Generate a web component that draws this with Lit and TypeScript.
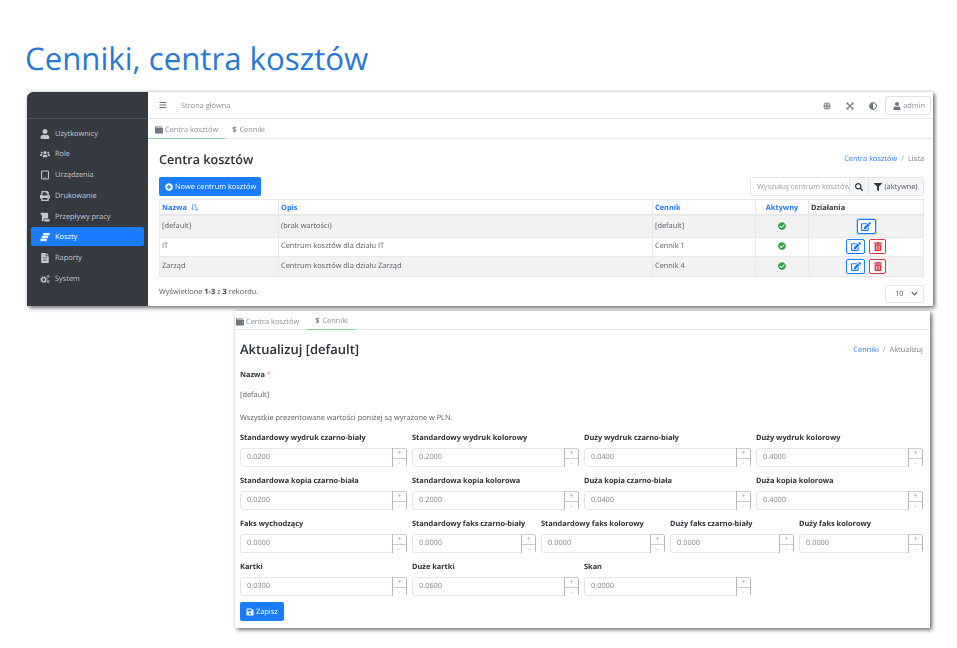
import { LitElement, html, css, svg } from "lit";
import { customElement } from "lit/decorators.js";

const fa = (vb: string, d: string, cls = "") =>
  html`<svg class="ic ${cls}" viewBox=${vb} fill="currentColor"><path d=${d}></path></svg>`;

const P = {
  user: ["0 0 448 512", "M224 256c70.7 0 128-57.3 128-128S294.7 0 224 0 96 57.3 96 128s57.3 128 128 128zm89.6 32h-16.7c-22.2 10.2-46.9 16-72.9 16s-50.6-5.8-72.9-16h-16.7C60.2 288 0 348.2 0 422.4V464c0 26.5 21.5 48 48 48h352c26.5 0 48-21.5 48-48v-41.6c0-74.2-60.2-134.4-134.4-134.4z"],
  check: ["0 0 512 512", "M504 256c0 136.967-111.033 248-248 248S8 392.967 8 256 119.033 8 256 8s248 111.033 248 248zM227.314 387.314l184-184c6.248-6.248 6.248-16.379 0-22.627l-22.627-22.627c-6.248-6.249-16.379-6.249-22.628 0L216 308.118l-70.059-70.059c-6.248-6.248-16.379-6.248-22.628 0l-22.627 22.627c-6.248 6.248-6.248 16.379 0 22.627l104 104c6.249 6.249 16.379 6.249 22.628.001z"],
  plus: ["0 0 512 512", "M256 8C119 8 8 119 8 256s111 248 248 248 248-111 248-248S393 8 256 8zm144 276c0 6.6-5.4 12-12 12h-92v92c0 6.6-5.4 12-12 12h-56c-6.6 0-12-5.4-12-12v-92h-92c-6.6 0-12-5.4-12-12v-56c0-6.6 5.4-12 12-12h92v-92c0-6.6 5.4-12 12-12h56c6.6 0 12 5.4 12 12v92h92c6.6 0 12 5.4 12 12v56z"],
  search: ["0 0 512 512", "M505 442.7L405.3 343c-4.5-4.5-10.6-7-17-7H372c27.6-35.3 44-79.7 44-128C416 93.1 322.9 0 208 0S0 93.1 0 208s93.1 208 208 208c48.3 0 92.7-16.4 128-44v16.3c0 6.4 2.5 12.5 7 17l99.7 99.7c9.4 9.4 24.6 9.4 33.9 0l28.3-28.3c9.4-9.4 9.4-24.6.1-34zM208 336c-70.7 0-128-57.2-128-128 0-70.7 57.2-128 128-128 70.7 0 128 57.2 128 128 0 70.7-57.2 128-128 128z"],
  filter: ["0 0 512 512", "M487.976 0H24.028C2.71 0-8.047 25.866 7.058 40.971L192 225.941V432c0 7.831 3.821 15.17 10.237 19.662l80 55.98C298.02 518.69 320 507.493 320 487.98V225.941l184.947-184.97C520.021 25.896 509.338 0 487.976 0z"],
  trash: ["0 0 448 512", "M32 464a48 48 0 0 0 48 48h288a48 48 0 0 0 48-48V128H32zm272-256a16 16 0 0 1 32 0v224a16 16 0 0 1-32 0zm-96 0a16 16 0 0 1 32 0v224a16 16 0 0 1-32 0zm-96 0a16 16 0 0 1 32 0v224a16 16 0 0 1-32 0zM432 32H312l-9.4-18.7A24 24 0 0 0 281.1 0H166.8a23.72 23.72 0 0 0-21.4 13.3L136 32H16A16 16 0 0 0 0 48v32a16 16 0 0 0 16 16h416a16 16 0 0 0 16-16V48a16 16 0 0 0-16-16z"],
  edit: ["0 0 576 512", "M402.6 83.2l90.2 90.2c3.8 3.8 3.8 10 0 13.8L274.4 405.6l-92.8 10.3c-12.4 1.4-22.9-9.1-21.5-21.5l10.3-92.8L388.8 83.2c3.8-3.8 10-3.8 13.8 0zm162-22.9l-48.8-48.8c-15.2-15.2-39.9-15.2-55.2 0l-35.4 35.4c-3.8 3.8-3.8 10 0 13.8l90.2 90.2c3.8 3.8 10 3.8 13.8 0l35.4-35.4c15.2-15.3 15.2-40 0-55.2zM384 346.2V448H64V128h229.8c3.2 0 6.2-1.3 8.5-3.5l40-40c7.6-7.6 2.2-20.5-8.5-20.5H48C21.5 64 0 85.5 0 112v352c0 26.5 21.5 48 48 48h352c26.5 0 48-21.5 48-48V306.2c0-10.7-12.9-16-20.5-8.5l-40 40c-2.2 2.3-3.5 5.3-3.5 8.5z"],
  save: ["0 0 448 512", "M433.941 129.941l-83.882-83.882A48 48 0 0 0 316.118 32H48C21.49 32 0 53.49 0 80v352c0 26.51 21.49 48 48 48h352c26.51 0 48-21.49 48-48V163.882a48 48 0 0 0-14.059-33.941zM224 416c-35.346 0-64-28.654-64-64 0-35.346 28.654-64 64-64s64 28.654 64 64c0 35.346-28.654 64-64 64zm96-304.52V212c0 6.627-5.373 12-12 12H76c-6.627 0-12-5.373-12-12V108c0-6.627 5.373-12 12-12h228.52c3.183 0 6.235 1.264 8.485 3.515l3.48 3.48A11.996 11.996 0 0 1 320 111.48z"],
  bars: ["0 0 448 512", "M16 132h416c8.837 0 16-7.163 16-16V76c0-8.837-7.163-16-16-16H16C7.163 60 0 67.163 0 76v40c0 8.837 7.163 16 16 16zm0 160h416c8.837 0 16-7.163 16-16v-40c0-8.837-7.163-16-16-16H16c-8.837 0-16 7.163-16 16v40c0 8.837 7.163 16 16 16zm0 160h416c8.837 0 16-7.163 16-16v-40c0-8.837-7.163-16-16-16H16c-8.837 0-16 7.163-16 16v40c0 8.837 7.163 16 16 16z"],
  wallet: ["0 0 512 512", "M461.2 128H80c-8.84 0-16-7.16-16-16s7.16-16 16-16h384c8.84 0 16-7.16 16-16 0-26.51-21.49-48-48-48H64C28.65 32 0 60.65 0 96v320c0 35.35 28.65 64 64 64h397.2c28.02 0 50.8-21.53 50.8-48V176c0-26.47-22.78-48-50.8-48zM416 336c-17.67 0-32-14.33-32-32s14.33-32 32-32 32 14.33 32 32-14.33 32-32 32z"],
  adjust: ["0 0 512 512", "M8 256c0 136.967 111.033 248 248 248s248-111.033 248-248S392.967 8 256 8 8 119.033 8 256zm248 184V72c101.705 0 184 82.311 184 184 0 101.705-82.311 184-184 184z"],
  print: ["0 0 512 512", "M448 192V77.25c0-8.49-3.37-16.62-9.37-22.63L393.37 9.37c-6-6-14.14-9.37-22.63-9.37H96C78.33 0 64 14.33 64 32v160c-35.35 0-64 28.65-64 64v112c0 8.84 7.16 16 16 16h48v96c0 17.67 14.33 32 32 32h320c17.67 0 32-14.33 32-32v-96h48c8.84 0 16-7.16 16-16V256c0-35.35-28.65-64-64-64zm-64 256H128v-96h256v96zm0-224H128V64h192v48c0 8.84 7.16 16 16 16h48v96zm48 72c-13.25 0-24-10.75-24-24 0-13.26 10.75-24 24-24s24 10.74 24 24c0 13.25-10.75 24-24 24z"],
  file: ["0 0 384 512", "M224 136V0H24C10.7 0 0 10.7 0 24v464c0 13.3 10.7 24 24 24h336c13.3 0 24-10.7 24-24V160H248c-13.2 0-24-10.8-24-24zm64 236c0 6.6-5.4 12-12 12H108c-6.6 0-12-5.4-12-12v-8c0-6.6 5.4-12 12-12h168c6.6 0 12 5.4 12 12v8zm0-64c0 6.6-5.4 12-12 12H108c-6.6 0-12-5.4-12-12v-8c0-6.6 5.4-12 12-12h168c6.6 0 12 5.4 12 12v8zm0-72v8c0 6.6-5.4 12-12 12H108c-6.6 0-12-5.4-12-12v-8c0-6.6 5.4-12 12-12h168c6.6 0 12 5.4 12 12zm96-114.1v6.1H256V0h6.1c6.4 0 12.5 2.5 17 7l97.9 98c4.5 4.5 7 10.6 7 16.9z"],
} as const;

const icon = (n: keyof typeof P) => fa(P[n][0], P[n][1]);

const custom = (body: unknown, vb = "0 0 16 16") =>
  html`<svg class="ic" viewBox=${vb} fill="currentColor">${body}</svg>`;

const usersIc = () => custom(svg`
  <circle cx="8" cy="5.6" r="2.5"></circle><path d="M4 13c0-3 1.5-4.4 4-4.4S12 10 12 13z"></path>
  <circle cx="2.8" cy="6" r="1.6"></circle><circle cx="13.2" cy="6" r="1.6"></circle>
  <path d="M0 11c0-2 1-3 2.6-3 .6 0 1 .2 1.4.5C3.300 9.300 3 10 3 11z"></path>
  <path d="M16 11c0-2-1-3-2.600-3-.6 0-1 .2-1.400.5.700.8 1 1.500 1 2.500z"></path>`);
const tabletIc = () => custom(svg`<rect x="2.500" y="1.500" width="11" height="13" rx="1.500" fill="none" stroke="currentColor" stroke-width="1.700"></rect><rect x="6" y="12" width="4" height="1.200"></rect>`);
const scrollIc = () => custom(svg`<path d="M1 2.500C1 1.600 1.700 1 2.600 1H11c1.200 0 2 .8 2 2v7.500h-7V12.500C6 14 5 15 4 15s-1-1-1-2V4.500H1z"></path><path d="M7 11.500h8.500V13c0 1.200-.8 2-2 2H6.500c.5-.6.5-1.500.5-3.500z"></path>`);
const coinsIc = () => custom(svg`<rect x="5" y="1.500" width="10.500" height="4" rx="1"></rect><rect x="2.500" y="6" width="10.500" height="4" rx="1" stroke="#1a7cff" stroke-width=".5"></rect><rect x=".5" y="10.500" width="10.500" height="4.300" rx="1" stroke="#1a7cff" stroke-width=".5"></rect>`);
const cogsIc = () => custom(svg`
  <circle cx="6" cy="9" r="3.200" fill="none" stroke="currentColor" stroke-width="2.300"></circle>
  <circle cx="6" cy="9" r="5" fill="none" stroke="currentColor" stroke-width="1.500" stroke-dasharray="1.800 2.100"></circle>
  <circle cx="13.200" cy="3.800" r="1.600" fill="none" stroke="currentColor" stroke-width="1.300"></circle>
  <circle cx="13.200" cy="12.200" r="1.600" fill="none" stroke="currentColor" stroke-width="1.300"></circle>`);
const globeIc = () => custom(svg`<circle cx="8" cy="8" r="7"></circle><g fill="none" stroke="#fff" stroke-width="1"><ellipse cx="8" cy="8" rx="3" ry="7"></ellipse><path d="M1 5.500h14M1 10.500h14"></path></g>`);
const expandIc = () => custom(svg`<path d="M1 1h5L4.300 2.700 8 6.300 11.700 2.700 10 1h5v5l-1.700-1.700L9.700 8l3.600 3.700L15 10v5h-5l1.700-1.700L8 9.700l-3.700 3.600L6 15H1v-5l1.700 1.700L6.300 8 2.700 4.300 1 6z"></path>`);
const sortIc = () => custom(svg`<path d="M3 1.500h1.800v9.500H7L3.900 15 .8 11H3z"></path><rect x="8.500" y="2" width="2.600" height="5.500"></rect><rect x="8.500" y="9" width="7" height="1.700"></rect><rect x="8.500" y="12.500" width="7" height="2.300"></rect>`);

const MENU = [
  { label: "Użytkownicy", ic: () => icon("user") },
  { label: "Role", ic: usersIc },
  { label: "Urządzenia", ic: tabletIc },
  { label: "Drukowanie", ic: () => icon("print") },
  { label: "Przepływy pracy", ic: scrollIc },
  { label: "Koszty", ic: coinsIc, active: true },
  { label: "Raporty", ic: () => icon("file") },
  { label: "System", ic: cogsIc },
];

const ROWS = [
  { name: "[default]", desc: "(brak wartości)", list: "[default]", del: false },
  { name: "IT", desc: "Centrum kosztów dla działu IT", list: "Cennik 1", del: true },
  { name: "Zarząd", desc: "Centrum kosztów dla działu Zarząd", list: "Cennik 4", del: true },
];

const FORM = [
  { cls: "four", fields: [["Standardowy wydruk czarno-biały", "0.0200"], ["Standardowy wydruk kolorowy", "0.2000"], ["Duży wydruk czarno-biały", "0.0400"], ["Duży wydruk kolorowy", "0.4000"]] },
  { cls: "four", fields: [["Standardowa kopia czarno-biała", "0.0200"], ["Standardowa kopia kolorowa", "0.2000"], ["Duża kopia czarno-biała", "0.0400"], ["Duża kopia kolorowa", "0.4000"]] },
  { cls: "five", fields: [["Faks wychodzący", "0.0000"], ["Standardowy faks czarno-biały", "0.0000"], ["Standardowy faks kolorowy", "0.0000"], ["Duży faks czarno-biały", "0.0000"], ["Duży faks kolorowy", "0.0000"]] },
  { cls: "four", fields: [["Kartki", "0.0300"], ["Duże kartki", "0.0600"], ["Skan", "0.0000"]] },
];

@customElement("app-root")
export class AppRoot extends LitElement {
  static styles = css`
    :host {
      display: block;
      width: 957px;
      height: 648px;
      overflow: hidden;
      background: #fff;
      font-family: "Open Sans", "Liberation Sans", sans-serif;
      font-size: 7.4px;
      text-rendering: geometricPrecision;
      color: #5a6169;
    }
    .ic { width: 8px; height: 8px; flex: none; display: inline-block; }
    .title {
      margin: 0;
      padding: 38px 0 0 25px;
      height: 92px;
      box-sizing: border-box;
      font-size: 31.2px;
      line-height: 42px;
      font-weight: 400;
      color: #2a78d6;
    }
    .panel {
      background: #fff;
      filter: blur(0.3px);
      box-shadow: 2px 2px 4px rgba(0, 0, 0, 0.55), 0 -1px 3px rgba(0, 0, 0, 0.12);
    }
    .top-panel {
      display: flex;
      margin-left: 27px;
      width: 906px;
      height: 214px;
    }
    .side {
      width: 121px;
      flex: none;
      background: #343a40;
      border-top-left-radius: 6px;
      color: #c2c7d0;
    }
    .side-head { height: 27px; border-bottom: 1px solid #4b545c; box-sizing: border-box; }
    .menu { display: flex; flex-direction: column; gap: 1.8px; padding: 4px 4px 0; }
    .menu a {
      display: flex;
      align-items: center;
      gap: 5px;
      height: 19px;
      padding: 2px 0 0 9px;
      box-sizing: border-box;
      border-radius: 2px;
    }
    .menu a .ic { width: 10px; height: 10px; }
    .menu a.on { background: #1a7cff; color: #fff; }
    .main { flex: 1; min-width: 0; }
    .bar {
      display: flex;
      align-items: center;
      height: 27px;
      padding: 1px 2px 0 11px;
      box-sizing: border-box;
      border-bottom: 1px solid #e6e8ea;
      color: #8a9097;
    }
    .bar .burger { width: 8px; height: 9px; color: #6c757d; margin-right: 14px; display: flex; }
    .bar .grow { flex: 1; }
    .bar .tool { width: 8px; height: 8px; color: #6c757d; margin-right: 15px; display: flex; }
    .bar .tool.last { margin-right: 8px; }
    .who {
      display: flex;
      align-items: center;
      gap: 2px;
      height: 19px;
      padding: 0 5px 0 7px;
      border: 1px solid #dee2e6;
      border-radius: 3px;
      box-sizing: border-box;
    }
    .who .ic { color: #6c757d; }
    .tabs { display: flex; height: 20px; border-bottom: 1px solid #e6e8ea; box-sizing: border-box; color: #8a9097; }
    .tabs a { display: flex; align-items: center; gap: 2px; padding: 2px 7px 0; margin-bottom: -1px; }
    .tabs a .ic { color: #6c757d; }
    .tabs a b { color: #6c757d; font-weight: 700; margin-right: 1px; }
    .tabs a.on { border-bottom: 1px solid #8ed2a4; }
    .tabs a.price { padding: 2px 8px 0 7px; }
    .content { padding: 0 9px 0 11px; }
    .head { display: flex; align-items: center; justify-content: space-between; height: 38px; padding-top: 1px; box-sizing: border-box; }
    .head h2 { margin: 1px 0 0; font-size: 12.6px; font-weight: 600; color: #2b3035; }
    .crumb { color: #7a8087; }
    .crumb a { color: #2f86f5; }
    .crumb i { font-style: normal; padding: 0 4px; color: #9aa0a6; }
    .tools { display: flex; justify-content: space-between; height: 19px; margin-bottom: 3px; }
    .btn {
      display: flex;
      align-items: center;
      gap: 2px;
      background: #1a7cff;
      color: #fff;
      border-radius: 2px;
      box-sizing: border-box;
      white-space: nowrap;
    }
    .add { width: 102px; height: 19px; padding-left: 6px; }
    .find { display: flex; border: 1px solid #e4e7ea; border-radius: 2px; box-sizing: border-box; width: 174px; }
    .find span { display: flex; align-items: center; }
    .find .q { width: 98px; padding-left: 6px; color: #9aa0a6; white-space: nowrap; overflow: hidden; box-sizing: border-box; }
    .find .s { width: 19px; justify-content: center; background: #f4f5f6; border-left: 1px solid #e4e7ea; color: #343a40; box-sizing: border-box; }
    .find .f { flex: 1; justify-content: center; gap: 2px; background: #f4f5f6; border-left: 1px solid #e4e7ea; }
    .find .f .ic { color: #343a40; }
    table { border-collapse: collapse; table-layout: fixed; width: 764px; }
    th, td { border: 1px solid #e6e8ea; padding: 0 2px; text-align: left; }
    th { height: 15px; font-weight: 700; color: #1a7cff; border-bottom-width: 2px; padding-top: 3px; box-sizing: border-box; }
    th.plain { color: #343a40; }
    th .sort { display: inline-block; width: 11px; height: 8px; vertical-align: -1px; color: #6aa8f7; }
    th .sort .ic { width: 11px; height: 8px; }
    tbody tr:nth-child(odd) { background: #f2f2f2; }
    td { padding-bottom: 1px; box-sizing: content-box; height: 17px; }
    tr.tall td { height: 20px; }
    tr:nth-child(3) td { height: 18px; }
    td.cell-act { padding-bottom: 0; }
    .mid { text-align: center; }
    .mid .ic { width: 8px; height: 8px; color: #28a745; display: block; margin: 0 auto; }
    .acts { display: flex; justify-content: center; gap: 4px; }
    .act {
      display: flex;
      align-items: center;
      justify-content: center;
      width: 19px;
      height: 15px;
      border: 1px solid #1a7cff;
      border-radius: 2px;
      box-sizing: border-box;
      color: #1a7cff;
      background: #fff;
    }
    .act .ic { width: 10px; height: 9px; }
    .act.del { color: #dc3545; border-color: #dc3545; width: 17px; }
    tr.tall .act { box-shadow: 0 0 0 1px #b6d4fb; }
    .foot { display: flex; align-items: center; justify-content: space-between; height: 18px; margin-top: 8px; }
    .foot .count { padding-bottom: 4px; }
    .foot b { color: #3c4248; }
    .size {
      display: flex;
      align-items: center;
      justify-content: space-between;
      width: 39px;
      height: 18px;
      padding: 0 5px 0 9px;
      border: 1px solid #e4e7ea;
      border-radius: 2px;
      box-sizing: border-box;
    }
    .size svg { width: 7px; height: 5px; color: #5a6169; }

    .form-panel { margin: 5px 0 0 235px; width: 695px; height: 317px; }
    .form-panel .tabs { height: 19px; }
    .form-panel .tabs a:first-child { padding-left: 1px; }
    .form-panel .tabs a.price { margin-left: 1px; padding-left: 8px; }
    .form { padding: 0 7px 0 5px; }
    .form .head h2 { font-size: 13px; margin: -1px 0 0; }
    .lab { font-weight: 700; color: #2b3035; }
    .lab em { font-style: normal; color: #e57a85; font-weight: 400; }
    .req { height: 19px; padding-top: 2px; line-height: 11px; box-sizing: border-box; }
    .val { height: 20px; line-height: 12px; padding-top: 2px; box-sizing: border-box; }
    .note { height: 25.5px; padding-top: 5px; line-height: 12px; box-sizing: border-box; }
    .rows { display: flex; flex-direction: column; gap: 4px; }
    .row { display: grid; column-gap: 5px; height: 39px; align-content: start; }
    .row.four { grid-template-columns: repeat(4, 167px); }
    .row.five { grid-template-columns: 167px repeat(4, 124px); }
    .field .lab { height: 15px; line-height: 11px; white-space: nowrap; }
    .num {
      display: flex;
      height: 19px;
      border: 1px solid #e4e7ea;
      border-radius: 3px;
      box-sizing: border-box;
      color: #7d838a;
    }
    .num .v { flex: 1; padding-left: 6px; line-height: 17px; }
    .spin {
      width: 15px;
      display: flex;
      flex-direction: column;
      border: 1px solid #b4b9be;
      border-width: 0 1px 1px 1px;
      margin: -1px -1px -1px 0;
      border-radius: 0 3px 3px 0;
      box-sizing: border-box;
      color: #a0a5aa;
      text-align: center;
      line-height: 9px;
      font-size: 7px;
    }
    .spin span { flex: 1; background: #fff; border-top: 1px solid #c8ccd0; }
    .save { width: 44px; height: 19px; padding-left: 6px; margin-top: 1.5px; }
  `;

  private renderTable() {
    return html`
      <table>
        <colgroup>
          <col style="width:119px" /><col style="width:374px" /><col style="width:103px" /><col style="width:53px" /><col style="width:115px" />
        </colgroup>
        <thead>
          <tr>
            <th>Nazwa ${html`<span class="sort">${sortIc()}</span>`}</th>
            <th>Opis</th>
            <th>Cennik</th>
            <th class="mid">Aktywny</th>
            <th class="plain">Działania</th>
          </tr>
        </thead>
        <tbody>
          ${ROWS.map(
            (r) => html`
              <tr class=${r.del ? "" : "tall"}>
                <td>${r.name}</td>
                <td>${r.desc}</td>
                <td>${r.list}</td>
                <td class="mid">${icon("check")}</td>
                <td class="cell-act">
                  <div class="acts">
                    <span class="act">${icon("edit")}</span>
                    ${r.del ? html`<span class="act del">${icon("trash")}</span>` : ""}
                  </div>
                </td>
              </tr>
            `
          )}
        </tbody>
      </table>
    `;
  }

  render() {
    return html`
      <h1 class="title">Cenniki, centra kosztów</h1>
      <section class="panel top-panel">
        <aside class="side">
          <div class="side-head"></div>
          <nav class="menu">
            ${MENU.map((m) => html`<a class=${m.active ? "on" : ""}>${m.ic()}${m.label}</a>`)}
          </nav>
        </aside>
        <div class="main">
          <div class="bar">
            <span class="burger">${icon("bars")}</span>
            <span>Strona główna</span>
            <span class="grow"></span>
            <span class="tool">${globeIc()}</span>
            <span class="tool">${expandIc()}</span>
            <span class="tool last">${icon("adjust")}</span>
            <span class="who">${icon("user")}admin</span>
          </div>
          <div class="tabs">
            <a class="on">${icon("wallet")}Centra kosztów</a>
            <a class="price"><b>$</b>Cenniki</a>
          </div>
          <div class="content">
            <div class="head">
              <h2>Centra kosztów</h2>
              <div class="crumb"><a>Centra kosztów</a><i>/</i>Lista</div>
            </div>
            <div class="tools">
              <span class="btn add">${icon("plus")}Nowe centrum kosztów</span>
              <div class="find">
                <span class="q">Wyszukaj centrum kosztów</span>
                <span class="s">${icon("search")}</span>
                <span class="f">${icon("filter")}(aktywne)</span>
              </div>
            </div>
            ${this.renderTable()}
            <div class="foot">
              <span class="count">Wyświetlone <b>1-3</b> z <b>3</b> rekordu.</span>
              <span class="size">10
                <svg viewBox="0 0 10 6" fill="none" stroke="currentColor" stroke-width="1.600"><path d="M1 1l4 4 4-4"></path></svg>
              </span>
            </div>
          </div>
        </div>
      </section>
      <section class="panel form-panel">
        <div class="tabs">
          <a>${icon("wallet")}Centra kosztów</a>
          <a class="on price"><b>$</b>Cenniki</a>
        </div>
        <div class="form">
          <div class="head">
            <h2>Aktualizuj [default]</h2>
            <div class="crumb"><a>Cenniki</a><i>/</i>Aktualizuj</div>
          </div>
          <div class="lab req">Nazwa <em>*</em></div>
          <div class="val">[default]</div>
          <div class="note">Wszystkie prezentowane wartości poniżej są wyrażone w PLN.</div>
          <div class="rows">
            ${FORM.map(
              (row) => html`
                <div class="row ${row.cls}">
                  ${row.fields.map(
                    ([label, value]) => html`
                      <div class="field">
                        <div class="lab">${label}</div>
                        <div class="num">
                          <span class="v">${value}</span>
                          <span class="spin"><span>+</span><span>-</span></span>
                        </div>
                      </div>
                    `
                  )}
                </div>
              `
            )}
          </div>
          <span class="btn save">${icon("save")}Zapisz</span>
        </div>
      </section>
    `;
  }
}
